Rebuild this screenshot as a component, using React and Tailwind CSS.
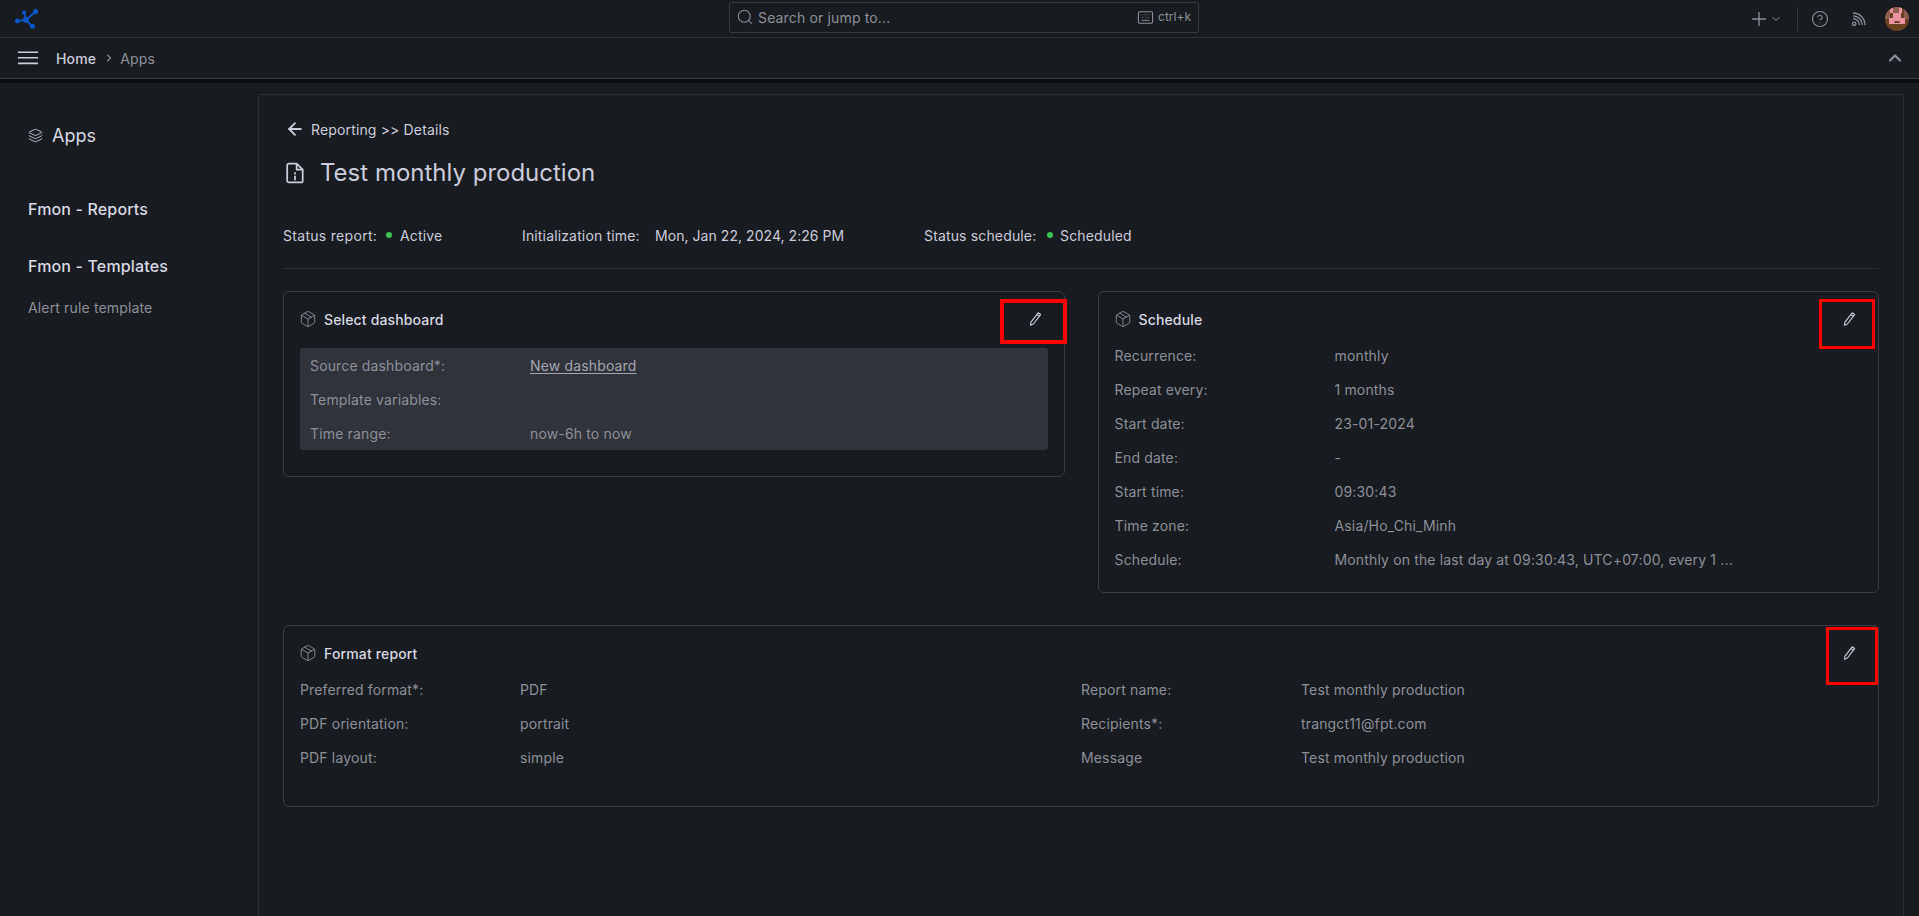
import React from "react";
import { ArrowLeft, ChevronDown, ChevronRight, ChevronUp, CircleHelp, Keyboard, Layers, Package, Plus, Search } from "lucide-react";

function PenIcon() {
  return (
    <svg width="16" height="16" viewBox="0 0 16 16" fill="none" stroke="#c4c5d2" strokeWidth="1.2" strokeLinejoin="round" className="shrink-0">
      <path d="M11.2 1.8 L13.6 3.6 L6.4 13 L3.6 14.3 L3.8 11.3 Z" />
      <path d="M10 3.4 L12.4 5.2" />
    </svg>
  );
}

function Logo() {
  return (
    <svg width="26" height="22" viewBox="0 0 26 22" fill="#0a55c8" stroke="#0a55c8" className="shrink-0">
      <path d="M11 12 L21 3 M11 12 L9 4 M11 12 L2 13 M11 12 L17 18" strokeWidth="1.8" />
      <circle cx="11" cy="12" r="3" stroke="none" />
      <circle cx="20.6" cy="3.6" r="2.6" stroke="none" />
      <circle cx="9" cy="4.6" r="2.1" stroke="none" />
      <circle cx="2.4" cy="13" r="2.4" stroke="none" />
      <circle cx="17.4" cy="18.2" r="2.5" stroke="none" />
    </svg>
  );
}

function Hamburger() {
  return (
    <svg width="20" height="14" viewBox="0 0 20 14" stroke="#ccccdc" strokeWidth="1.6" className="shrink-0">
      <path d="M0 1.2H20M0 6.8H20M0 12.4H20" />
    </svg>
  );
}

function RssIcon() {
  return (
    <svg width="16" height="16" viewBox="0 0 16 16" fill="none" stroke="#8e8f99" strokeWidth="1.3" className="shrink-0">
      <circle cx="3.2" cy="12.8" r="1.7" />
      <path d="M2 7.6a6.4 6.4 0 0 1 6.4 6.4" />
      <path d="M2 4.8a9.2 9.2 0 0 1 9.2 9.2" />
      <path d="M2 2a12 12 0 0 1 12 12" />
    </svg>
  );
}

function FileInfoIcon() {
  return (
    <svg width="20" height="22" viewBox="0 0 18 20" fill="none" stroke="#ccccdc" strokeWidth="1.6" strokeLinejoin="round" className="shrink-0">
      <path d="M3.5 1.5H10.5L16 7V17a1.6 1.6 0 0 1-1.6 1.6H3.5A1.6 1.6 0 0 1 1.9 17V3.1A1.6 1.6 0 0 1 3.5 1.5Z" />
      <path d="M10.5 1.5V7H16" />
      <path d="M9 10V10.6M9 13V16" strokeLinecap="round" />
    </svg>
  );
}

function Avatar() {
  return (
    <svg width="24" height="24" viewBox="0 0 24 24" className="shrink-0 rounded-full">
      <rect width="24" height="24" fill="#6a421f" />
      <rect x="0" y="0" width="5" height="12" fill="#8e5f50" />
      <rect x="19" y="0" width="5" height="12" fill="#8e5f50" />
      <rect x="5" y="0" width="3" height="6" fill="#e8939f" />
      <rect x="14" y="0" width="3" height="6" fill="#e8939f" />
      <rect x="8" y="0" width="6" height="6" fill="#8e5f50" />
      <rect x="8" y="6" width="8" height="5" fill="#e8939f" />
      <rect x="4" y="11" width="16" height="6" fill="#e8939f" />
      <rect x="9.5" y="14" width="5" height="2" fill="#6a421f" />
    </svg>
  );
}

function Row({ label, value, link }) {
  return (
    <div className="flex items-center h-[34px] text-[14px] text-[#8e8f99]">
      <span className="w-[220px] shrink-0">{label}</span>
      {link ? <span className="underline underline-offset-2 text-[#a5a6b1]">{value}</span> : <span>{value}</span>}
    </div>
  );
}

function CardHeader({ title }) {
  return (
    <div className="flex items-center h-[20px]">
      <Package size={18} strokeWidth={1.2} className="text-[#8e8f99] shrink-0 -ml-[1px]" />
      <span className="ml-[7px] text-[14px] font-medium text-[#d8d9e4]">{title}</span>
      <span className="ml-auto mr-[5px] flex">
        <PenIcon />
      </span>
    </div>
  );
}

function RedBox({ className }) {
  return <div className={"absolute border-[#ff0000] " + className} />;
}

export default function App() {
  return (
    <div className="w-full h-[916px] overflow-hidden flex flex-col bg-[#181b1f] text-[#ccccdc] tracking-[0.15px] [font-family:Inter,sans-serif]">
      <header className="h-[38px] shrink-0 border-b border-[#2f3136] flex items-center relative">
        <div className="flex-1 flex items-center pl-[15px]">
          <Logo />
        </div>
        <div className="w-[470px] h-[31px] -mt-[3px] mr-[6px] border border-[#34373c] rounded-[2px] flex items-center pl-[6px] pr-[7px] text-[#8e8f99]">
          <Search size={18} strokeWidth={1.4} className="shrink-0" />
          <span className="ml-[4px] text-[14px]">Search or jump to...</span>
          <Keyboard size={17} strokeWidth={1.5} className="ml-auto shrink-0" />
          <span className="ml-[4px] text-[12px] tracking-normal">ctrl+k</span>
        </div>
        <div className="flex-1 flex items-center justify-end text-[#8e8f99]">
          <Plus size={22} strokeWidth={1.5} className="shrink-0" />
          <ChevronDown size={12} strokeWidth={2} className="shrink-0" />
          <div className="w-px h-[24px] bg-[#34373c] ml-[15px]" />
          <CircleHelp size={18} strokeWidth={1.5} className="ml-[13px] shrink-0" />
          <span className="ml-[22px] flex"><RssIcon /></span>
          <span className="ml-[18px] mr-[10px] flex"><Avatar /></span>
        </div>
      </header>

      <div className="h-[41px] shrink-0 border-b border-[#3a3c41] flex items-center pl-[18px] pr-[14px] text-[14px]">
        <Hamburger />
        <span className="ml-[18px] text-[#ccccdc] font-medium">Home</span>
        <ChevronRight size={12} strokeWidth={2.2} className="ml-[7px] text-[#8e8f99]" />
        <span className="ml-[5px] text-[#8e8f99]">Apps</span>
        <ChevronUp size={20} strokeWidth={2.6} className="ml-auto text-[#8e8f99]" />
      </div>
      <div className="h-[4px] shrink-0 bg-[#0b0c0f]" />

      <div className="flex-1 flex min-h-0">
        <aside className="w-[258px] shrink-0 pl-[28px]">
          <div className="flex items-center h-[28px] mt-[38px]">
            <Layers size={15} strokeWidth={1.4} className="text-[#ccccdc] shrink-0" />
            <span className="ml-[9px] text-[18px] text-[#d8d9e4] tracking-normal">Apps</span>
          </div>
          <div className="mt-[48px] h-[24px] flex items-center text-[16px] font-medium text-[#d8d9e4]">Fmon - Reports</div>
          <div className="mt-[33px] h-[24px] flex items-center text-[16px] font-medium text-[#d8d9e4]">Fmon - Templates</div>
          <div className="mt-[19px] h-[20px] flex items-center text-[14px] text-[#8e8f99]">Alert rule template</div>
        </aside>

        <main className="flex-1 mt-[11px] mr-[15px] border-l border-t border-r border-[#2b2e33] rounded-t-[2px] pl-[24px] pr-[24px] pt-[24px] min-w-0">
          <div className="flex items-center h-[20px] pl-[2px] text-[14px]">
            <ArrowLeft size={20} strokeWidth={2.2} className="shrink-0" />
            <span className="ml-[6px]">Reporting &gt;&gt; Details</span>
          </div>
          <div className="flex items-center h-[32px] mt-[18px] pl-[2px]">
            <FileInfoIcon />
            <span className="ml-[15px] text-[24px] text-[#ccccdc] tracking-normal">Test monthly production</span>
          </div>
          <div className="flex items-center h-[20px] mt-[36px] text-[14px]">
            <div className="w-[239px] shrink-0 flex items-center">
              <span className="w-[103px] shrink-0 tracking-[0.3px]">Status report:</span>
              <span className="w-[6px] h-[6px] rounded-full bg-[#3ac44f]" />
              <span className="ml-[8px]">Active</span>
            </div>
            <div className="w-[402px] shrink-0 flex items-center">
              <span className="w-[133px] shrink-0">Initialization time:</span>
              <span className="tracking-[0.05px]">Mon, Jan 22, 2024, 2:26 PM</span>
            </div>
            <div className="flex items-center">
              <span className="w-[123px] shrink-0">Status schedule:</span>
              <span className="w-[6px] h-[6px] rounded-full bg-[#3ac44f]" />
              <span className="ml-[7px]">Scheduled</span>
            </div>
          </div>
          <div className="h-px bg-[#2b2e33] mt-[23px]" />

          <div className="flex items-start gap-[33px] mt-[22px]">
            <section className="relative flex-1 h-[186px] border border-[#3a3c41] rounded-[6px] px-[16px] pt-[17px]">
              <CardHeader title="Select dashboard" />
              <div className="mt-[19px] rounded-[3px] bg-[#303339] pl-[10px]">
                <Row label="Source dashboard*:" value="New dashboard" link />
                <Row label="Template variables:" value="" />
                <Row label="Time range:" value="now-6h to now" />
              </div>
              <RedBox className="border-[4px] top-[7px] right-[-3px] w-[67px] h-[45px]" />
            </section>

            <section className="relative flex-1 h-[302px] border border-[#3a3c41] rounded-[6px] px-[16px] pt-[17px]">
              <CardHeader title="Schedule" />
              <div className="mt-[9px]">
                <Row label="Recurrence:" value="monthly" />
                <Row label="Repeat every:" value="1 months" />
                <Row label="Start date:" value="23-01-2024" />
                <Row label="End date:" value="-" />
                <Row label="Start time:" value="09:30:43" />
                <Row label="Time zone:" value="Asia/Ho_Chi_Minh" />
                <Row label="Schedule:" value="Monthly on the last day at 09:30:43, UTC+07:00, every 1 ..." />
              </div>
              <RedBox className="border-[3px] top-[7px] right-[3px] w-[56px] h-[50px]" />
            </section>
          </div>

          <section className="relative h-[182px] mt-[32px] border border-[#3a3c41] rounded-[6px] px-[16px] pt-[17px]">
            <CardHeader title="Format report" />
            <div className="mt-[9px] flex">
              <div className="w-[781px] shrink-0">
                <Row label="Preferred format*:" value="PDF" />
                <Row label="PDF orientation:" value="portrait" />
                <Row label="PDF layout:" value="simple" />
              </div>
              <div className="flex-1">
                <Row label="Report name:" value="Test monthly production" />
                <Row label="Recipients*:" value="trangct11@fpt.com" />
                <Row label="Message" value="Test monthly production" />
              </div>
            </div>
            <RedBox className="border-[3px] top-[1px] right-0 w-[52px] h-[58px]" />
          </section>
        </main>
      </div>
    </div>
  );
}
